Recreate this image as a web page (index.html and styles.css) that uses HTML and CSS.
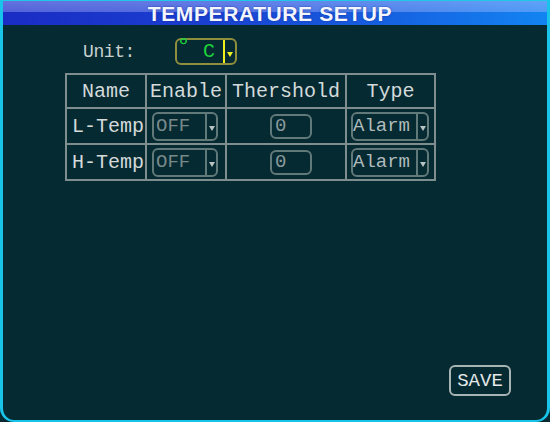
FILE: index.html
```html
<!DOCTYPE html>
<html lang="en">
<head>
  <meta charset="UTF-8">
  <title>Temperature Setup</title>
  <link rel="stylesheet" href="styles.css">
</head>
<body>
  <div class="frame">
    <div class="title-bar">TEMPERATURE SETUP</div>

    <div class="unit-row">
      <span class="unit-label">Unit:</span>
      <div class="unit-select">
        <span class="deg">°</span>
        <span class="unit-value">C</span>
        <span class="unit-drop"><i class="arrow yellow"></i></span>
      </div>
    </div>

    <table class="grid">
      <tr>
        <th class="c-name">Name</th>
        <th class="c-enable">Enable</th>
        <th class="c-thr">Thershold</th>
        <th class="c-type">Type</th>
      </tr>
      <tr>
        <td>L-Temp</td>
        <td><div class="combo off"><span class="val">OFF</span><span class="drop"><i class="arrow"></i></span></div></td>
        <td><div class="field">0</div></td>
        <td><div class="combo type"><span class="val">Alarm</span><span class="drop"><i class="arrow"></i></span></div></td>
      </tr>
      <tr>
        <td>H-Temp</td>
        <td><div class="combo off"><span class="val">OFF</span><span class="drop"><i class="arrow"></i></span></div></td>
        <td><div class="field">0</div></td>
        <td><div class="combo type"><span class="val">Alarm</span><span class="drop"><i class="arrow"></i></span></div></td>
      </tr>
    </table>

    <div class="footer">
      <button class="save">SAVE</button>
    </div>
  </div>
</body>
</html>
```

FILE: styles.css
```css
html, body {
  margin: 0;
  padding: 0;
  background: #062a32;
}
.frame {
  width: 550px;
  height: 422px;
  box-sizing: border-box;
  border-top: 1px solid #1ec8e6;
  border-left: 3px solid #18c4ea;
  border-right: 3px solid #18c4ea;
  border-bottom: 2px solid #18c4ea;
  border-radius: 0 0 14px 14px;
  background: #062a32;
  display: flex;
  flex-direction: column;
  font-family: "Courier New", "Nimbus Mono PS", "Nimbus Mono L", FreeMono, "Liberation Mono", monospace;
  color: #d4dada;
  overflow: hidden;
}
.title-bar {
  height: 24px;
  line-height: 25px;
  text-align: center;
  padding-right: 10px;
  font-family: "Liberation Sans", Arial, sans-serif;
  font-weight: bold;
  font-size: 21px;
  letter-spacing: 0.6px;
  color: #f4f6ff;
  text-shadow: 0 0 2px rgba(20, 40, 140, 0.8);
  background:
    linear-gradient(to bottom, rgba(190, 200, 255, 0.45) 0, rgba(190, 200, 255, 0.35) 11px, rgba(0, 0, 0, 0) 11px),
    linear-gradient(to right, #1a2cc4 0%, #1a3ed0 35%, #1660e0 70%, #1284f2 100%);
}
.unit-row {
  display: flex;
  align-items: center;
  margin-top: 13px;
  padding-left: 80px;
  height: 27px;
}
.unit-label {
  width: 92px;
  font-size: 18px;
  letter-spacing: -0.4px;
  color: #c8d0d0;
}
.unit-select {
  position: relative;
  width: 62px;
  height: 27px;
  box-sizing: border-box;
  border: 2px solid #8e8e3c;
  border-radius: 6px;
  display: flex;
  align-items: center;
}
.deg {
  position: absolute;
  left: 1px;
  top: -6px;
  font-family: "DejaVu Sans", sans-serif;
  font-size: 22px;
  color: #1cd23a;
}
.unit-value {
  flex: 1;
  padding-left: 26px;
  font-size: 20px;
  color: #1cd23a;
}
.unit-drop {
  width: 10px;
  height: 100%;
  border-left: 2px solid #f0f020;
  display: flex;
  align-items: center;
  justify-content: center;
}
.arrow {
  display: block;
  width: 0;
  height: 0;
  margin-top: 4px;
  border-left: 3px solid transparent;
  border-right: 3px solid transparent;
  border-top: 5px solid #b8c4c4;
}
.arrow.yellow {
  border-top-color: #f0f020;
  margin-top: 5px;
}
.grid {
  align-self: flex-start;
  margin: 8px 0 0 62px;
  border-collapse: collapse;
  table-layout: fixed;
}
.grid th, .grid td {
  border: 2px solid #7e8e8e;
  height: 34px;
  padding: 0;
  font-size: 20px;
  font-weight: normal;
  text-align: center;
  white-space: nowrap;
  overflow: hidden;
}
.grid th {
  height: 32px;
}
.grid td:first-child {
  text-align: left;
  padding-left: 5px;
}
.c-name { width: 78px; }
.c-enable { width: 78px; }
.c-thr { width: 118px; }
.c-type { width: 87px; }
.combo {
  display: flex;
  height: 29px;
  box-sizing: border-box;
  border: 2px solid #62797a;
  border-radius: 6px;
  font-size: 19px;
  align-items: center;
}
.combo .val {
  flex: 1;
  text-align: left;
  padding-left: 2px;
}
.combo .drop {
  width: 9px;
  height: 100%;
  border-left: 2px solid #62797a;
  display: flex;
  align-items: center;
  justify-content: center;
}
.combo.off {
  width: 66px;
  margin-left: 5px;
  color: #78898a;
}
.combo.type {
  width: 78px;
  margin-left: 4px;
  color: #b0bcbc;
}
.combo.type .val {
  padding-left: 0;
}
.field {
  width: 42px;
  height: 25px;
  margin-left: 43px;
  box-sizing: border-box;
  border: 2px solid #62797a;
  border-radius: 6px;
  font-size: 19px;
  line-height: 21px;
  text-align: left;
  padding-left: 3px;
  color: #8a9a9a;
}
.footer {
  margin-top: auto;
  display: flex;
  justify-content: flex-end;
  padding: 0 36px 24px 0;
}
.save {
  width: 62px;
  height: 31px;
  box-sizing: border-box;
  background: transparent;
  border: 2px solid #a8b4b4;
  border-radius: 6px;
  font-family: "Courier New", "Nimbus Mono PS", "Nimbus Mono L", FreeMono, "Liberation Mono", monospace;
  font-size: 19px;
  color: #e4e8e8;
  padding: 0;
}
```
